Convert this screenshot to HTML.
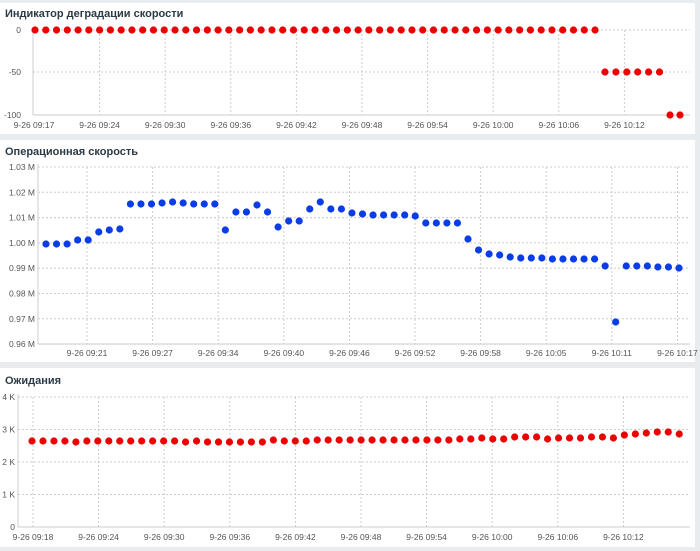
<!DOCTYPE html>
<html><head><meta charset="utf-8"><style>
html,body{margin:0;padding:0;width:700px;height:551px;overflow:hidden;background:#e9ecef;font-family:"Liberation Sans",sans-serif}
svg{position:absolute;left:0;top:0}
.t{font-size:8.5px;fill:#555}
.h{font-size:11px;font-weight:bold;fill:#2b3a45}
.g{stroke:#ccc;stroke-width:1;stroke-dasharray:2,2}
</style></head><body>
<svg id="s" width="700" height="551" xmlns="http://www.w3.org/2000/svg">
<rect x="0" y="3" width="695" height="131" fill="#fff"/>
<rect x="0" y="140" width="695" height="222" fill="#fff"/>
<rect x="0" y="368" width="695" height="179" fill="#fff"/>
<text class="h" x="5" y="17">Индикатор деградации скорости</text>
<text class="h" x="5" y="155">Операционная скорость</text>
<text class="h" x="5" y="384">Ожидания</text>
<g id="c"></g>
</svg>
<script>
var c=document.getElementById('c'),h='';
function ln(x1,y1,x2,y2,cl){h+='<line x1="'+x1+'" y1="'+y1+'" x2="'+x2+'" y2="'+y2+'" '+(cl?'class="g"':'stroke="#c8ccd0"')+'/>';}
function tx(x,y,s,a){h+='<text class="t" x="'+x+'" y="'+y+'" text-anchor="'+(a||'middle')+'">'+s+'</text>';}
function dot(x,y,col){h+='<circle cx="'+x+'" cy="'+y+'" r="3.6" fill="'+col+'"/>';}
// chart1
[[30,'0'],[72,'-50'],[115,'-100']].forEach(function(v){ln(33,v[0],690,v[0],1);tx(21,v[0]+3,v[1],'end');});
var l1=['09:17','09:24','09:30','09:36','09:42','09:48','09:54','10:00','10:06','10:12'];
l1.forEach(function(s,i){var x=34+i*65.6;if(i)ln(x,30,x,115,1);tx(x,128,'9-26 '+s);});
ln(33,27,33,115);ln(33,115,690,115);
for(var i=0;i<53;i++)dot(35+i*10.77,30,'#e00');
for(var i=0;i<6;i++)dot(605+i*10.9,72,'#e00');
dot(670,115,'#e00');dot(680,115,'#e00');
// chart2
['1.03 M','1.02 M','1.01 M','1.00 M','0.99 M','0.98 M','0.97 M','0.96 M'].forEach(function(s,i){var y=167+i*25.3;ln(38,y,690,y,1);tx(35,y+3,s,'end');});
var l2=['09:21','09:27','09:34','09:40','09:46','09:52','09:58','10:05','10:11','10:17'];
l2.forEach(function(s,i){var x=87+i*65.6;ln(x,167,x,344,1);tx(x,356,'9-26 '+s);});
ln(38,164,38,344);ln(38,344,690,344);
var ys=[244,244,244,240,240,232,230,229,204,204,204,203,202,203,204,204,204,230,212,212,205,212,227,221,221,209,202,209,209,213,214,215,215,215,215,216,223,223,223,223,239,250,254,255,257,258,258,258,259,259,259,259,259,266,322,266,266,266,267,267,268];
ys.forEach(function(y,i){dot(46+i*10.55,y,'#0a3de8');});
// chart3
['4 K','3 K','2 K','1 K','0'].forEach(function(s,i){var y=397+i*32.5;ln(18,y,690,y,1);tx(15,y+3,s,'end');});
var l3=['09:18','09:24','09:30','09:36','09:42','09:48','09:54','10:00','10:06','10:12'];
l3.forEach(function(s,i){var x=33+i*65.6;ln(x,397,x,527,1);tx(x,540,'9-26 '+s);});
ln(18,394,18,527);ln(18,527,690,527);
var y3=[441,441,441,441,442,441,441,441,441,441,441,441,441,441,442,441,442,442,442,442,442,442,440,441,441,441,440,440,440,440,440,440,440,440,440,440,440,440,440,439,439,438,439,439,437,437,437,439,438,438,438,437,437,438,435,434,433,432,432,434];
y3.forEach(function(y,i){dot(32+i*10.97,y,'#e00');});
c.innerHTML=h;
</script>
</body></html>
